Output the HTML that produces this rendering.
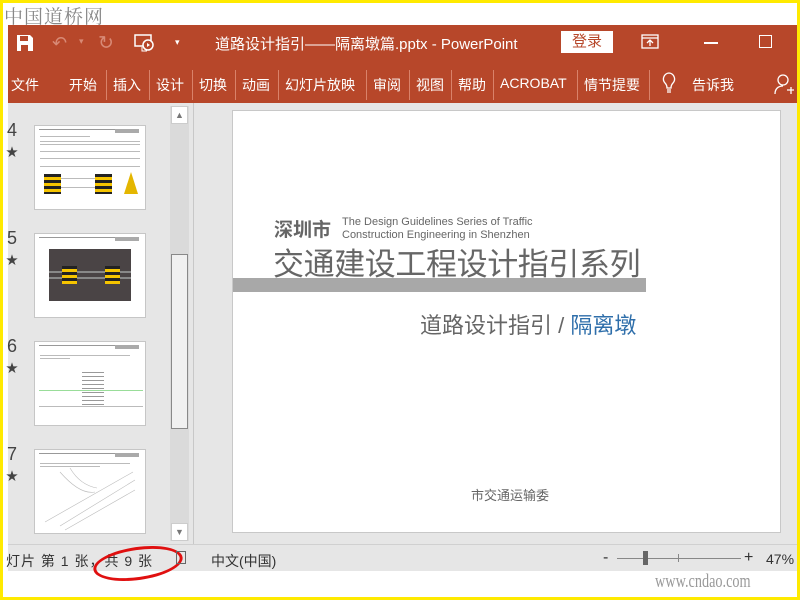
<!DOCTYPE html>
<html><head><meta charset="utf-8"><style>
*{margin:0;padding:0;box-sizing:border-box}
body{width:800px;height:600px;position:relative;overflow:hidden;background:#fff;font-family:"Liberation Sans","Noto Sans CJK SC",sans-serif}
.a{position:absolute}
.yl{background:#ffea00}
.t{color:#fff;font-size:14px;white-space:nowrap}
.sep{position:absolute;top:70px;width:1px;height:30px;background:#d9826a}
.thumb{position:absolute;left:34px;width:112px;height:85px;background:#fff;border:1px solid #c6c6c6}
.num{position:absolute;left:7px;font-size:18px;color:#444}
.star{position:absolute;left:6px;font-size:12px;color:#444}
.hd{position:absolute;left:4px;top:3px;width:100px;height:4px;border-top:1px solid #999}
.hd:after{content:"";position:absolute;right:0;top:-1px;width:24px;height:4px;background:#aaa}
.ln{position:absolute;left:5px;height:1px;background:#bbb}
</style></head><body>
<div class="a yl" style="left:0;top:0;width:800px;height:3px"></div>
<div class="a yl" style="left:0;top:0;width:3px;height:600px"></div>
<div class="a yl" style="right:0;top:0;width:3px;height:600px"></div>
<div class="a yl" style="left:0;bottom:0;width:800px;height:3px"></div>
<div class="a" style="left:4px;top:2px;font-family:'Noto Serif CJK SC',serif;font-size:19px;color:#888;letter-spacing:1px">中国道桥网</div>
<div class="a" style="left:8px;top:25px;width:789px;height:78px;background:#b7472a"></div>
<svg class="a" style="left:16px;top:34px" width="18" height="18" viewBox="0 0 18 18"><path d="M1 1h13l3 3v13H1z" fill="#fff"/><rect x="4" y="2" width="8" height="5" fill="#b7472a"/><rect x="5" y="11" width="7" height="6" fill="#b7472a"/></svg>
<div class="a t" style="left:52px;top:33px;font-size:18px;color:#d88a76">↶</div>
<div class="a t" style="left:79px;top:36px;font-size:9px;color:#d88a76">▾</div>
<div class="a t" style="left:98px;top:32px;font-size:19px;color:#d88a76">↻</div>
<svg class="a" style="left:134px;top:34px" width="22" height="20" viewBox="0 0 22 20"><rect x="1" y="1" width="16" height="11" fill="none" stroke="#fff" stroke-width="1.5"/><circle cx="14" cy="11" r="5" fill="#b7472a" stroke="#fff" stroke-width="1.5"/><path d="M13 9l3 2-3 2z" fill="#fff"/><path d="M8 13v4h5" stroke="#fff" fill="none"/></svg>
<div class="a t" style="left:175px;top:37px;font-size:9px">▾</div>
<div class="a t" style="left:215px;top:33px;font-size:15px">道路设计指引——隔离墩篇.pptx  -  PowerPoint</div>
<div class="a" style="left:561px;top:31px;width:52px;height:22px;background:#fff;color:#b7472a;font-size:15px;text-align:center;line-height:22px">登录</div>
<svg class="a" style="left:641px;top:34px" width="18" height="15"><rect x="1" y="1" width="16" height="13" fill="none" stroke="#fff" stroke-width="1.3"/><path d="M1 4h16M9 12V6M6 9l3-3 3 3" stroke="#fff" fill="none" stroke-width="1.3"/></svg>
<div class="a" style="left:704px;top:42px;width:14px;height:1.5px;background:#fff"></div>
<div class="a" style="left:759px;top:35px;width:13px;height:13px;border:1.5px solid #fff"></div>
<div class="a t" style="left:11px;top:75px">文件</div>
<div class="a t" style="left:69px;top:75px">开始</div>
<div class="sep" style="left:106px"></div>
<div class="a t" style="left:113px;top:75px">插入</div>
<div class="sep" style="left:149px"></div>
<div class="a t" style="left:156px;top:75px">设计</div>
<div class="sep" style="left:192px"></div>
<div class="a t" style="left:199px;top:75px">切换</div>
<div class="sep" style="left:235px"></div>
<div class="a t" style="left:242px;top:75px">动画</div>
<div class="sep" style="left:278px"></div>
<div class="a t" style="left:285px;top:75px">幻灯片放映</div>
<div class="sep" style="left:366px"></div>
<div class="a t" style="left:373px;top:75px">审阅</div>
<div class="sep" style="left:409px"></div>
<div class="a t" style="left:416px;top:75px">视图</div>
<div class="sep" style="left:451px"></div>
<div class="a t" style="left:458px;top:75px">帮助</div>
<div class="sep" style="left:493px"></div>
<div class="a t" style="left:500px;top:75px">ACROBAT</div>
<div class="sep" style="left:577px"></div>
<div class="a t" style="left:584px;top:75px">情节提要</div>
<div class="sep" style="left:649px"></div>
<svg class="a" style="left:662px;top:72px" width="14" height="22"><path d="M7 1a6 6 0 0 0-4 10c1 1 2 3 2 5h4c0-2 1-4 2-5A6 6 0 0 0 7 1zM5 18h4M5 20h4" stroke="#fff" fill="none" stroke-width="1.3"/></svg>
<div class="a t" style="left:692px;top:75px">告诉我</div>
<svg class="a" style="left:774px;top:73px" width="22" height="22"><circle cx="9" cy="7" r="5" stroke="#fff" fill="none" stroke-width="1.3"/><path d="M1 21c0-5 3-8 8-8M13 17h7M17 14v7" stroke="#fff" fill="none" stroke-width="1.3"/></svg>
<div class="a" style="left:8px;top:103px;width:789px;height:441px;background:#e6e6e6"></div>
<div class="a" style="left:193px;top:103px;width:1px;height:441px;background:#c8c8c8"></div>
<div class="a" style="left:170px;top:106px;width:19px;height:435px;background:#dadada"></div>
<div class="a" style="left:171px;top:106px;width:17px;height:18px;background:#fff;border:1px solid #ccc;color:#777;font-size:9px;text-align:center;line-height:16px">▲</div>
<div class="a" style="left:171px;top:523px;width:17px;height:18px;background:#fff;border:1px solid #ccc;color:#777;font-size:9px;text-align:center;line-height:16px">▼</div>
<div class="a" style="left:171px;top:254px;width:17px;height:175px;background:#f0f0f0;border:1px solid #888"></div>
<div class="num" style="top:120px">4</div><div class="star" style="top:143px">★</div>
<div class="thumb" style="top:125px"><div class="hd"></div>
<div class="ln" style="top:10px;width:50px"></div><div class="ln" style="top:15px;width:100px"></div><div class="ln" style="top:18px;width:100px"></div><div class="ln" style="top:25px;width:100px"></div><div class="ln" style="top:32px;width:100px"></div><div class="ln" style="top:40px;width:100px"></div>
<div class="a" style="left:9px;top:48px;width:17px;height:20px;background:repeating-linear-gradient(#222 0 3px,#f5c400 3px 6px)"></div>
<div class="a" style="left:60px;top:48px;width:17px;height:20px;background:repeating-linear-gradient(#222 0 3px,#f5c400 3px 6px)"></div>
<div class="a" style="left:26px;top:52px;width:34px;height:10px;border-top:1px solid #bbb;border-bottom:1px solid #bbb"></div>
<div class="a" style="left:89px;top:46px;width:0;height:0;border-left:7px solid transparent;border-right:7px solid transparent;border-bottom:22px solid #e4b600"></div>
</div>
<div class="num" style="top:228px">5</div><div class="star" style="top:251px">★</div>
<div class="thumb" style="top:233px"><div class="hd"></div>
<div class="a" style="left:14px;top:15px;width:82px;height:52px;background:#4a4445"></div>
<div class="a" style="left:14px;top:37px;width:82px;height:2px;background:#888"></div><div class="a" style="left:14px;top:43px;width:82px;height:2px;background:#888"></div>
<div class="a" style="left:27px;top:32px;width:15px;height:18px;background:repeating-linear-gradient(#222 0 3px,#f5c400 3px 6px)"></div>
<div class="a" style="left:70px;top:32px;width:15px;height:18px;background:repeating-linear-gradient(#222 0 3px,#f5c400 3px 6px)"></div>
</div>
<div class="num" style="top:336px">6</div><div class="star" style="top:359px">★</div>
<div class="thumb" style="top:341px"><div class="hd"></div>
<div class="ln" style="top:13px;width:90px"></div><div class="ln" style="top:16px;width:30px"></div>
<div class="a" style="left:47px;top:30px;width:22px;height:35px;background:repeating-linear-gradient(#999 0 1px,#fff 1px 4px)"></div>
<div class="a" style="left:4px;top:48px;width:104px;height:1px;background:#9d9"></div>
<div class="a" style="left:4px;top:64px;width:104px;height:1px;background:#bbb"></div>
</div>
<div class="num" style="top:444px">7</div><div class="star" style="top:467px">★</div>
<div class="thumb" style="top:449px"><div class="hd"></div>
<div class="ln" style="top:13px;width:90px"></div><div class="ln" style="top:16px;width:60px"></div>
<svg class="a" style="left:0;top:0" width="110" height="83"><path d="M10 72L98 22M25 76L100 30M30 80L100 40" stroke="#bbb" fill="none" stroke-width=".6"/><path d="M25 22Q45 45 60 42M35 18Q45 35 62 38" stroke="#bbb" fill="none" stroke-width=".6"/></svg>
</div>
<div class="a" style="left:232px;top:110px;width:549px;height:423px;background:#fff;border:1px solid #c8c8c8"></div>
<div class="a" style="left:274px;top:215px;font-size:19px;font-weight:bold;color:#666">深圳市</div>
<div class="a" style="left:342px;top:216px;font-size:11px;color:#666;line-height:13px">The Design Guidelines Series of Traffic<br>Construction Engineering in Shenzhen</div>
<div class="a" style="left:273px;top:239px;font-size:31px;color:#666;letter-spacing:-0.4px;white-space:nowrap">交通建设工程设计指引系列</div>
<div class="a" style="left:233px;top:278px;width:413px;height:14px;background:#a8a8a8"></div>
<div class="a" style="left:420px;top:308px;font-size:22px;color:#666;white-space:nowrap">道路设计指引 / <span style="color:#2e6eaa">隔离墩</span></div>
<div class="a" style="left:471px;top:485px;font-size:13px;color:#666">市交通运输委</div>
<div class="a" style="left:8px;top:544px;width:789px;height:27px;background:#e6e6e6;border-top:1px solid #d0d0d0"></div>
<div class="a" style="left:6px;top:551px;font-size:14px;color:#333;white-space:nowrap;letter-spacing:1px">灯片 第 1 张，共 9 张</div>
<div class="a" style="left:93px;top:547px;width:90px;height:33px;border:3px solid #e01010;border-radius:50%;transform:rotate(-8deg)"></div>
<div class="a" style="left:176px;top:551px;width:10px;height:13px;border:1px solid #666"></div>
<div class="a" style="left:211px;top:551px;font-size:14px;color:#333">中文(中国)</div>
<div class="a" style="left:603px;top:549px;font-size:16px;color:#333">-</div>
<div class="a" style="left:617px;top:558px;width:124px;height:1px;background:#888"></div>
<div class="a" style="left:643px;top:551px;width:5px;height:14px;background:#666"></div>
<div class="a" style="left:678px;top:554px;width:1px;height:8px;background:#888"></div>
<div class="a" style="left:744px;top:549px;font-size:16px;color:#333">+</div>
<div class="a" style="left:766px;top:551px;font-size:14px;color:#333">47%</div>
<div class="a" style="left:655px;top:571px;font-family:'Liberation Serif',serif;font-size:19px;color:#999;transform:scaleX(.75);transform-origin:left;white-space:nowrap">www.cndao.com</div>
</body></html>
